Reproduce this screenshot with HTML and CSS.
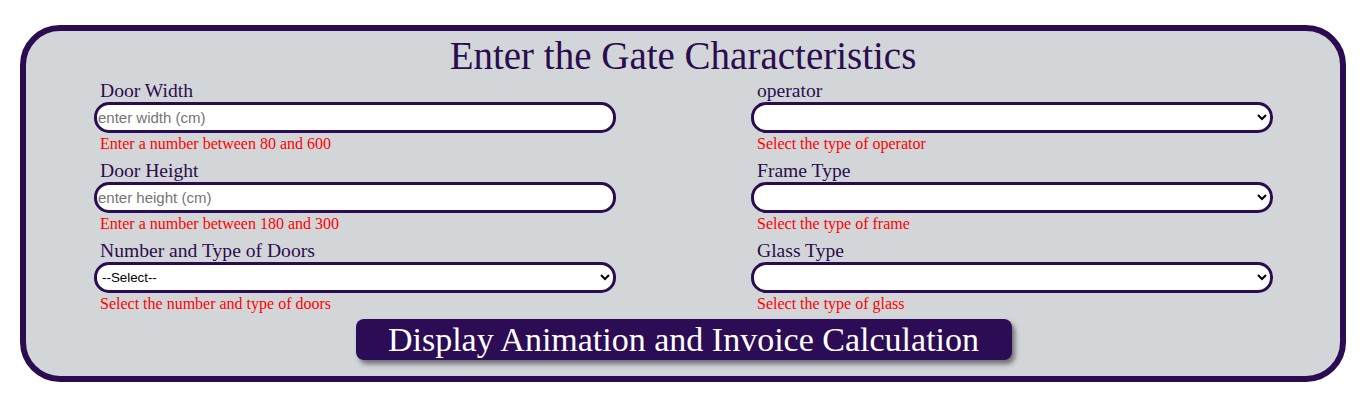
FILE: index.html
```html
<!DOCTYPE html>
<html lang="en">
<head>
<meta charset="utf-8">
<title>Gate Characteristics</title>
<link rel="stylesheet" href="styles.css">
</head>
<body>
<form class="panel">
  <h1 class="title">Enter the Gate Characteristics</h1>
  <div class="grid">
    <div class="field">
      <label class="label" for="w">Door Width</label>
      <input class="control input" id="w" type="text" placeholder="enter width (cm)">
      <div class="error">Enter a number between 80 and 600</div>
    </div>
    <div class="field">
      <label class="label" for="op">operator</label>
      <select class="control" id="op"><option></option></select>
      <div class="error">Select the type of operator</div>
    </div>
    <div class="field">
      <label class="label" for="h">Door Height</label>
      <input class="control input" id="h" type="text" placeholder="enter height (cm)">
      <div class="error">Enter a number between 180 and 300</div>
    </div>
    <div class="field">
      <label class="label" for="fr">Frame Type</label>
      <select class="control" id="fr"><option></option></select>
      <div class="error">Select the type of frame</div>
    </div>
    <div class="field">
      <label class="label" for="dt">Number and Type of Doors</label>
      <select class="control" id="dt"><option>--Select--</option></select>
      <div class="error">Select the number and type of doors</div>
    </div>
    <div class="field">
      <label class="label" for="gl">Glass Type</label>
      <select class="control" id="gl"><option></option></select>
      <div class="error">Select the type of glass</div>
    </div>
  </div>
  <div class="actions">
    <button class="btn" type="button">Display Animation and Invoice Calculation</button>
  </div>
</form>
</body>
</html>
```
FILE: styles.css
```css
html, body {
  margin: 0;
  padding: 0;
  background: #ffffff;
}
body {
  padding: 25px 19px 0 20px;
  font-family: "Liberation Serif", "Times New Roman", serif;
}
.panel {
  background: #d3d6d8;
  border: 6px solid #2b0c50;
  border-radius: 40px;
  padding: 2px 0 16px;
}
.title {
  margin: 0;
  text-align: center;
  font-weight: normal;
  font-size: 39px;
  line-height: 46px;
  color: #2b0c50;
}
.grid {
  display: grid;
  grid-template-columns: 1fr 1fr;
  row-gap: 6px;
}
.field {
  display: flex;
  flex-direction: column;
  padding: 0 67px 0 68px;
}
.label {
  display: block;
  height: 22px;
  line-height: 22px;
  padding: 1px 0 0 6px;
  font-size: 19.6px;
  color: #2b0c50;
}
.control {
  box-sizing: border-box;
  width: 100%;
  height: 31px;
  margin: 0;
  border: 3px solid #2b0c50;
  border-radius: 15px;
  background: #ffffff;
  font-family: "Liberation Sans", Arial, sans-serif;
  font-size: 13.33px;
  color: #000000;
  padding: 0 1px;
  outline: none;
}
.input {
  font-size: 15px;
}
.control::placeholder {
  color: #757575;
}
.error {
  height: 18px;
  line-height: 18px;
  margin-top: 2px;
  padding-left: 6px;
  font-size: 16px;
  color: #ff0000;
}
.actions {
  display: flex;
  justify-content: center;
  padding-top: 6px;
}
.btn {
  width: 656px;
  height: 41px;
  padding: 0;
  border: none;
  border-radius: 8px;
  background: #2b0c55;
  color: #ffffff;
  font-family: "Liberation Serif", "Times New Roman", serif;
  font-size: 34px;
  line-height: 41px;
  box-shadow: 3px 4px 5px #6e6e78;
  margin-left: 1px;
}
```
